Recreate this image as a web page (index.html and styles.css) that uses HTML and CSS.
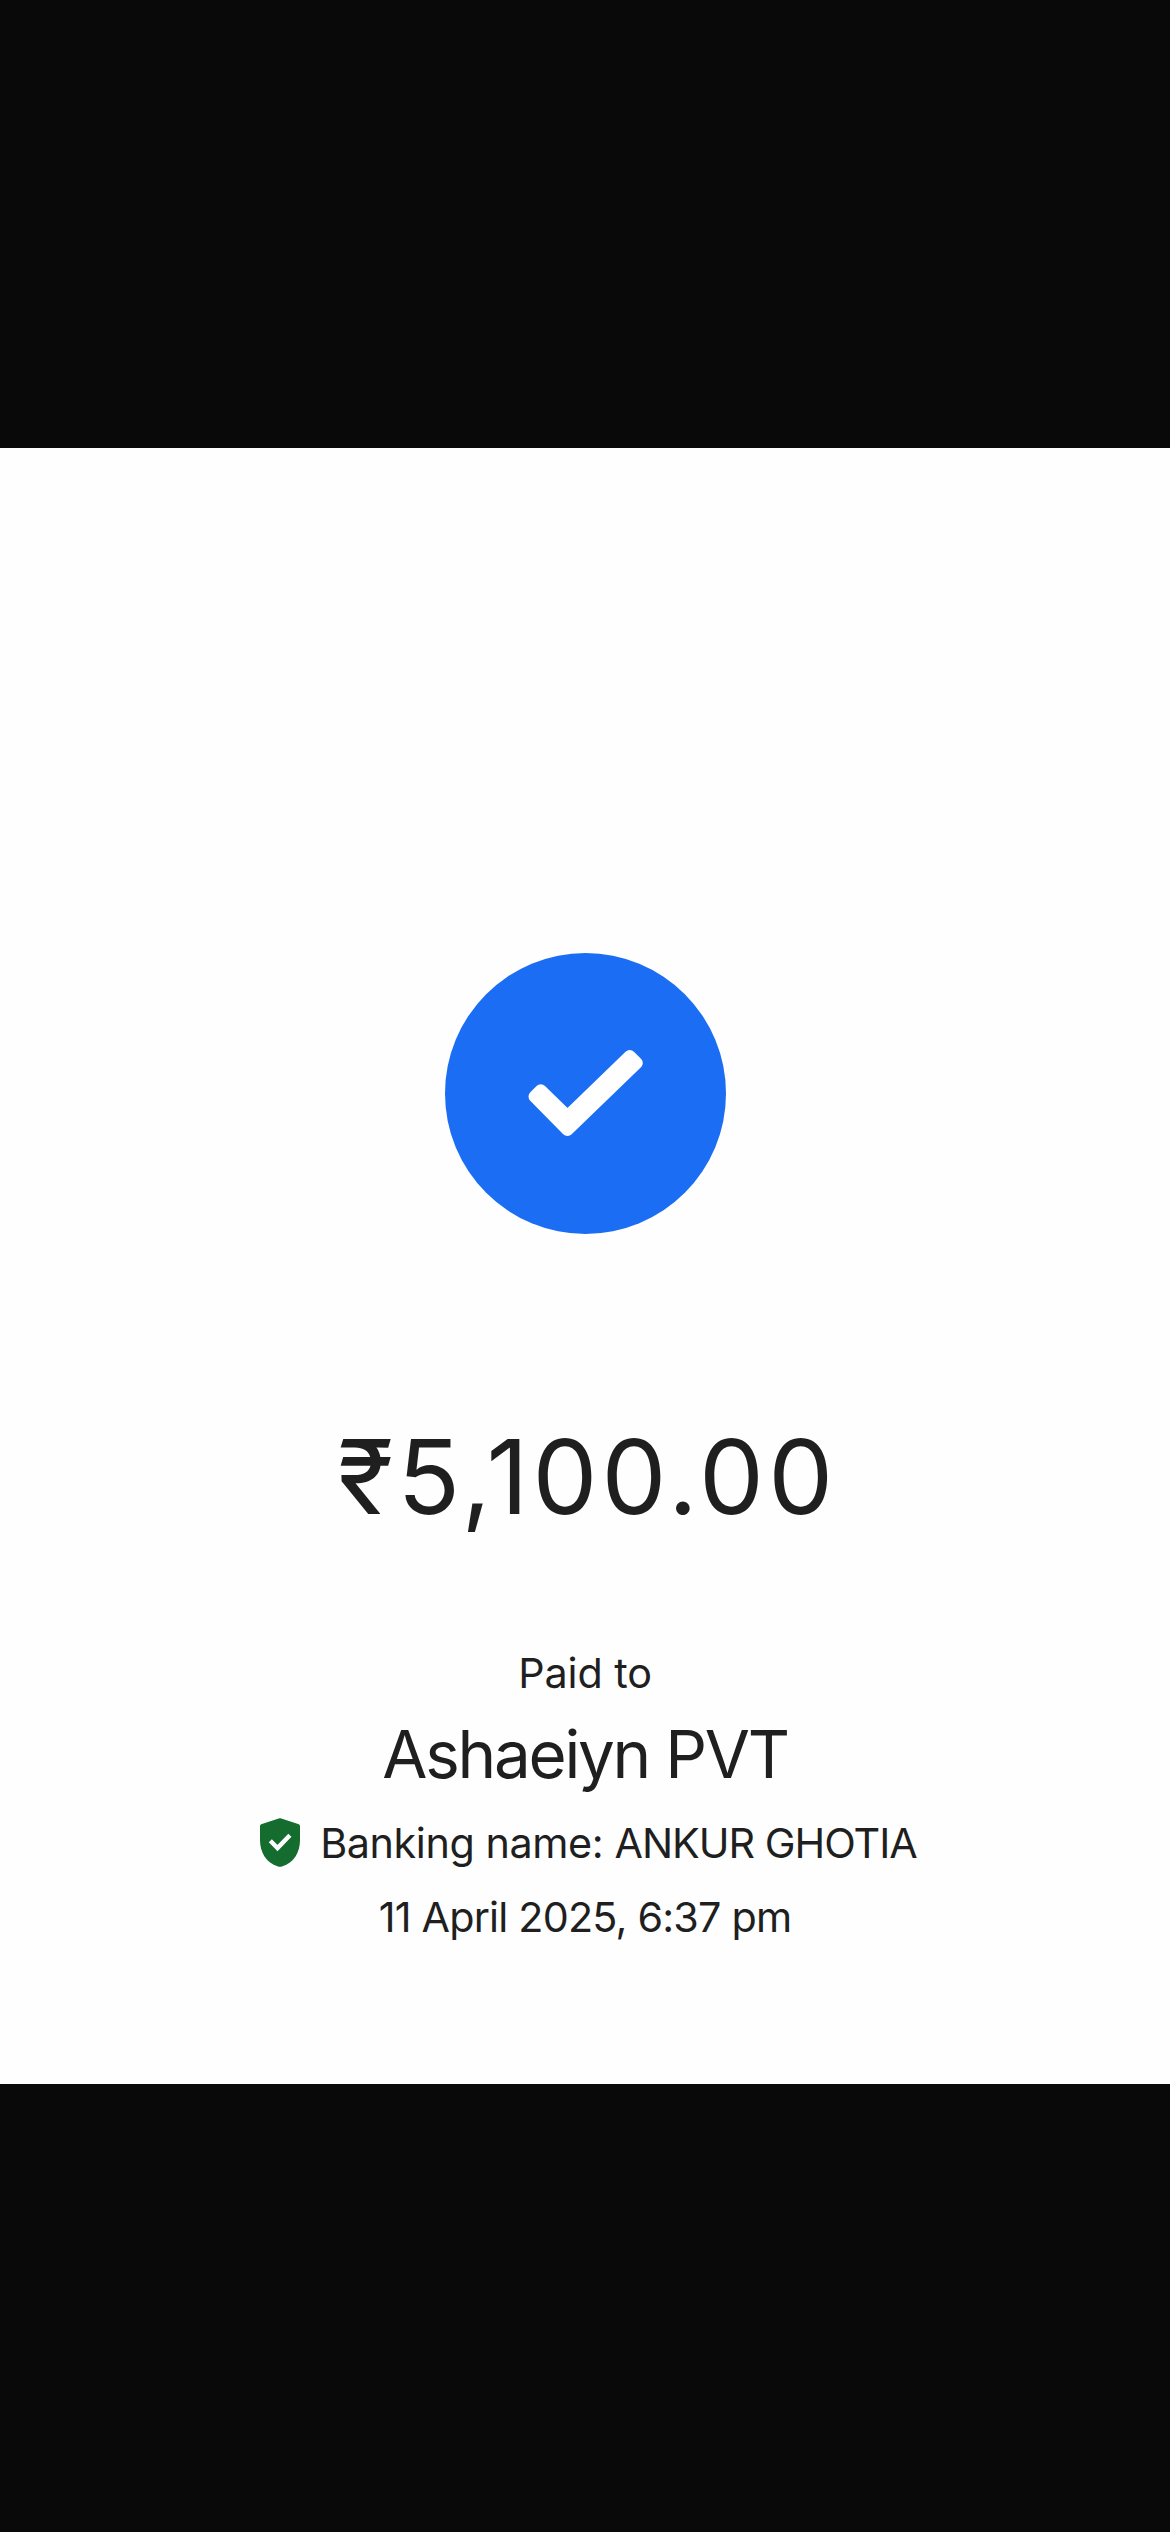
FILE: index.html
```html
<!DOCTYPE html>
<html lang="en">
<head>
<meta charset="utf-8">
<title>Payment receipt</title>
<link rel="stylesheet" href="styles.css">
</head>
<body>
<main class="receipt">
  <svg class="success" viewBox="0 0 281 281" aria-hidden="true">
    <circle cx="140.5" cy="140.5" r="140.5" fill="#1b6ef3"/>
    <path d="M122.5 177 L89.500 143.5 L95.800 137.3 L122.5 163.2 L184.700 103 L191.8 110 Z" fill="#fff" stroke="#fff" stroke-width="12" stroke-linejoin="round"/>
  </svg>
  <h1 class="amount">₹5,100.00</h1>
  <p class="label">Paid to</p>
  <h2 class="payee">Ashaeiyn PVT</h2>
  <div class="bank">
    <svg class="shield" viewBox="0 0 40 49" aria-hidden="true">
      <path d="M18.7 .4 Q20 -.1 21.300 .4 L38.800 6.300 Q40 6.800 40 8.200 V22 C40 34 34 45 22 48.500 Q20 49.200 18 48.500 C6 45 0 34 0 22 V8.200 Q0 6.800 1.200 6.300 Z" fill="#146c2e"/>
      <path d="M10.300 22.800 L17.500 30 L29.900 17.200" fill="none" stroke="#fff" stroke-width="4.400"/>
    </svg>
    <p class="bank-text">Banking name: <span class="holder">ANKUR GHOTIA</span></p>
  </div>
  <p class="date">11 April 2025, 6:37 pm</p>
</main>
</body>
</html>
```
FILE: styles.css
```css
body {
  margin: 0;
  min-height: 2532px;
  box-sizing: border-box;
  padding: 448px 0;
  background: #090909;
  color: #1f1f1f;
  font-family: Inter, "Liberation Sans", sans-serif;
}

h1, h2, p {
  margin: 0;
  font-weight: 400;
  white-space: nowrap;
}

.receipt {
  box-sizing: border-box;
  height: 1636px;
  padding-top: 505px;
  display: flex;
  flex-direction: column;
  align-items: center;
  background: #fefefe;
}

.success {
  display: block;
  width: 281px;
  height: 281px;
}

.amount {
  margin-top: 190px;
  padding-left: 5px;
  font-size: 103px;
  line-height: 105px;
  letter-spacing: 4.1px;
}

.label,
.bank-text,
.date {
  font-size: 41.3px;
  line-height: 60px;
}

.label {
  margin-top: 114px;
  letter-spacing: -0.1px;
}

.payee {
  margin-top: 10px;
  font-size: 65.5px;
  line-height: 84px;
  letter-spacing: -2.25px;
}

.bank {
  display: flex;
  align-items: center;
  gap: 20px;
  margin-top: 16px;
  padding-left: 7px;
}

.shield {
  width: 40px;
  height: 49px;
  margin-bottom: 1px;
}

.bank-text {
  letter-spacing: -0.4px;
}

.holder {
  letter-spacing: -1px;
}

.date {
  margin-top: 14px;
  letter-spacing: -0.8px;
}
```
